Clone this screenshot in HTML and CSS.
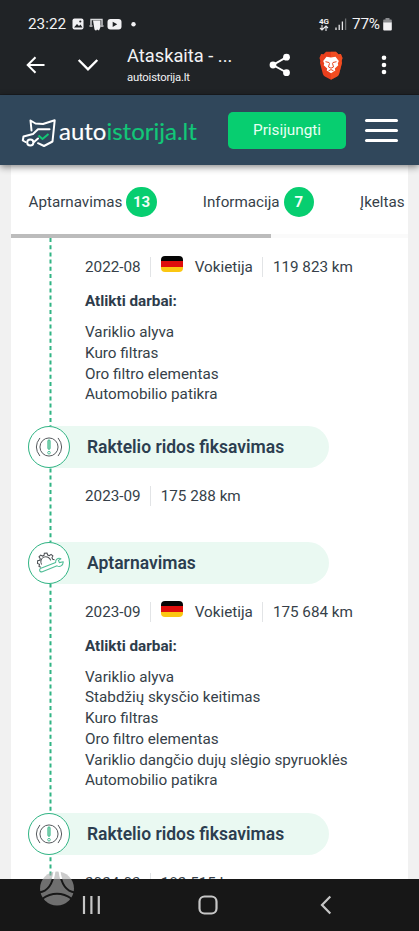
FILE: index.html
```html
<!DOCTYPE html>
<html lang="lt">
<head>
<meta charset="utf-8">
<meta name="viewport" content="width=device-width, initial-scale=1">
<title>Ataskaita - autoistorija.lt</title>
<link rel="stylesheet" href="styles.css">
</head>
<body>
<svg class="defs" width="0" height="0">
  <symbol id="brake" viewBox="0 0 42 42">
    <circle cx="21" cy="21" r="9.500" fill="none" stroke="#4d5155" stroke-width="1"/>
    <path d="M11.500 11.500q-7.500 9.500 0 19M30.500 11.500q7.500 9.500 0 19" fill="none" stroke="#4d5155" stroke-width="1"/>
    <rect x="19.800" y="13.500" width="2.400" height="10" rx="1.200" fill="#8ad5b5" stroke="#3cb98b" stroke-width=".9"/>
    <circle cx="21" cy="27" r="1.400" fill="none" stroke="#3cb98b" stroke-width=".9"/>
  </symbol>
  <symbol id="service" viewBox="0 0 42 42">
    <path d="M12.500 25.500l-2-.8.500-2.300-2.100-1 .2-2.800 2.200-.5.500-1.700-1.300-1.800 1.700-1.900 2 1 1.600-.8.300-2.200 2.800-.1.700 2 1.800.6 1.700-1.300 2 1.700-1 2 .8 1.500 1.900.5M13.200 22.500a5.300 5.300 0 1 1 9.600-4.200" fill="none" stroke="#4d5155" stroke-width="1.100"/>
    <path d="M12.500 26.500L28 20.500C27.500 17 30.500 15.300 33.500 16.500L30.900 18.300 31.900 20.600 36 19.800C35.700 24 32.300 25.500 29.500 24L14 30.200C11 31 10.100 27.700 12.500 26.500Z" fill="#fff" stroke="#4fbd96" stroke-width="1.100" stroke-linejoin="round"/>
  </symbol>
</svg>

<header class="system">
  <div class="status">
    <span class="clock">23:22</span>
    <svg class="notes" width="74" height="14" viewBox="0 0 74 14">
      <rect x="1.500" y="1.500" width="11" height="11" rx="2" fill="#f2f2f4"/>
      <path d="M3 10.500l3-3.500 2 2 1.500-1.500 2 3z" fill="#202326"/><circle cx="9.300" cy="4.500" r="1.100" fill="#202326"/>
      <path d="M20 8V2.500h11V8M18.500 9h3M29.500 9h3" fill="none" stroke="#d7d8da" stroke-width="1.400"/>
      <path d="M22 3.500h7.500v6.500l-1.500 3.500-2-1-1 1.300-1.500-1.300z" fill="#f2f2f4"/>
      <rect x="36.500" y="2" width="14" height="10.500" rx="3" fill="#f2f2f4"/><path d="M41.700 4.700l4.500 2.600-4.500 2.600z" fill="#202326"/>
      <circle cx="62.500" cy="7.300" r="2.200" fill="#f2f2f4"/>
    </svg>
    <span class="net"><b>4G</b>
      <svg width="10" height="6" viewBox="0 0 10 6"><path d="M3 0v5M1 3l2 2 2-2M7 6V1M5 3l2-2 2 2" fill="none" stroke="#e8e8ea" stroke-width="1.100"/></svg>
    </span>
    <svg class="signal" width="12" height="12" viewBox="0 0 12 12"><path d="M1 12V9.500M4.200 12V6.800M7.400 12V3.500" stroke="#e8e8ea" stroke-width="1.300"/><path d="M10.600 12V.5" stroke="#6d7073" stroke-width="1.300"/></svg>
    <span class="percent">77%</span>
    <svg class="battery" width="9" height="13" viewBox="0 0 9 13"><path d="M2.500 0h4v1.500H8q.8 0 .8.900V5H.2V2.400q0-.9.800-.9h1.500z" fill="#8b8d90"/><path d="M.2 4.500h8.600v7q0 1-1 1H1.200q-1 0-1-1z" fill="#f2f2f4"/></svg>
  </div>
  <div class="browser">
    <svg class="back" width="20" height="18" viewBox="0 0 20 18"><path d="M18.500 9H2M9.500 1.200L1.700 9l7.800 7.800" fill="none" stroke="#fff" stroke-width="2"/></svg>
    <svg class="down" width="22" height="14" viewBox="0 0 22 14"><path d="M1.700 2L11 11.300 20.300 2" fill="none" stroke="#fff" stroke-width="2.400"/></svg>
    <div class="page-name"><div class="title">Ataskaita - ...</div><div class="domain">autoistorija.lt</div></div>
    <svg class="share" width="22" height="24" viewBox="0 0 22 24"><path d="M17.500 4.200L4 12l13.500 7.500" fill="none" stroke="#fff" stroke-width="2"/><g fill="#fff"><circle cx="17.500" cy="4.200" r="3.400"/><circle cx="4" cy="12" r="3.400"/><circle cx="17.500" cy="19.700" r="3.400"/></g></svg>
    <svg class="brave" width="24" height="29" viewBox="0 0 24 29">
      <path d="M7 .8h10l2.400 2.500 2.500-.2L23.500 7l-.8 3 .3 2-2.900 11q-.6 1.600-2 2.600L12 28.700l-6.100-3.100q-1.400-1-2-2.600L1 12l.3-2L.5 7l1.600-3.900 2.500.2z" fill="#e93f1d"/>
      <path d="M17 .8l2.400 2.500 2.500-.2L23.500 7l-.8 3 .3 2-2.900 11q-.6 1.600-2 2.600L12 28.700V.8z" fill="#fa5a24" opacity=".55"/>
      <path d="M7.500 5.800l4.500.7 4.500-.7 3.300 4.200-1 2.500.5 1.700-3.500 3.300.5 2-4.300 2.800-4.300-2.800.5-2-3.500-3.300.5-1.700-1-2.500z" fill="#fff"/>
      <path d="M6.500 10.700l3.500.8.500.8-1 3.700 2.500 1.200 2.500-1.200-1-3.700.5-.8 3.500-.8M9.500 19.800l2.500-1.200 2.500 1.200" fill="none" stroke="#e8471f" stroke-width="1"/>
    </svg>
    <svg class="more" width="6" height="20" viewBox="0 0 6 20"><g fill="#fff"><circle cx="3" cy="2.800" r="2.300"/><circle cx="3" cy="10" r="2.300"/><circle cx="3" cy="17" r="2.300"/></g></svg>
  </div>
</header>

<nav class="site">
  <svg class="emblem" width="36" height="30" viewBox="0 0 36 30">
    <g fill="none" stroke="#fff" stroke-width="2" stroke-linejoin="round" stroke-linecap="round">
      <path d="M10.500 12.500L9.500 2.500 14.500 5.500 22 6 33.700 2.300 31.500 23.500 23 28 17 25.200"/>
      <path d="M28.500 11.200H17L12 16 2.500 18.500 1.800 22.500 4.500 24M13 24L17 20.500"/>
      <circle cx="9.300" cy="24.500" r="3.100"/>
    </g>
    <path d="M17.500 17.500l4 3.500 6-5" fill="none" stroke="#13c875" stroke-width="2"/>
  </svg>
  <div class="wordmark">auto<span>istorija.lt</span></div>
  <a class="login">Prisijungti</a>
  <div class="burger"><i></i><i></i><i></i></div>
</nav>

<main class="sheet">
  <div class="tabs">
    <div class="tab">Aptarnavimas <b>13</b></div>
    <div class="tab">Informacija <b>7</b></div>
    <div class="tab">Įkeltas</div>
  </div>
  <div class="scroller"><i></i></div>

  <div class="timeline">
    <svg class="rail" width="3" height="641" viewBox="0 0 3 641"><path d="M1.500 0V641" stroke="#31b484" stroke-width="2" stroke-dasharray="4 3.200"/></svg>
    <section class="event first">
      <div class="meta"><span>2022-08</span><span class="place"><i class="flag"></i>Vokietija</span><span>119 823 km</span></div>
      <h3>Atlikti darbai:</h3>
      <ul><li>Variklio alyva</li><li>Kuro filtras</li><li>Oro filtro elementas</li><li>Automobilio patikra</li></ul>
    </section>
    <section class="event">
      <div class="head"><svg class="badge"><use href="#brake"/></svg><h2>Raktelio ridos fiksavimas</h2></div>
      <div class="meta"><span>2023-09</span><span>175 288 km</span></div>
    </section>
    <section class="event after-short">
      <div class="head"><svg class="badge"><use href="#service"/></svg><h2>Aptarnavimas</h2></div>
      <div class="meta"><span>2023-09</span><span class="place"><i class="flag"></i>Vokietija</span><span>175 684 km</span></div>
      <h3>Atlikti darbai:</h3>
      <ul><li>Variklio alyva</li><li>Stabdžių skysčio keitimas</li><li>Kuro filtras</li><li>Oro filtro elementas</li><li>Variklio dangčio dujų slėgio spyruoklės</li><li>Automobilio patikra</li></ul>
    </section>
    <section class="event">
      <div class="head"><svg class="badge"><use href="#brake"/></svg><h2>Raktelio ridos fiksavimas</h2></div>
      <div class="meta"><span>2024-03</span><span>182 515 km</span></div>
    </section>
  </div>
</main>

<footer class="keys">
  <svg class="watermark" width="36" height="36" viewBox="0 0 36 36">
    <mask id="spokes"><rect width="36" height="36" fill="#fff"/><path d="M0 21.500Q13 20 15.500 0M20.500 0Q23 20 36 21.500M3 28Q18 17.500 33 28" fill="none" stroke="#000" stroke-width="2"/></mask>
    <circle cx="18" cy="17.500" r="17" fill="#aaa" fill-opacity=".6" mask="url(#spokes)"/>
  </svg>
  <svg class="recents" width="19" height="20" viewBox="0 0 19 20"><path d="M2 1v18M9.400 1v18M16.800 1v18" stroke="#c6c6c6" stroke-width="2.200"/></svg>
  <svg class="home" width="20" height="20" viewBox="0 0 20 20"><rect x="1.500" y="1.500" width="17" height="17" rx="5" fill="none" stroke="#c6c6c6" stroke-width="2.200"/></svg>
  <svg class="return" width="12" height="20" viewBox="0 0 12 20"><path d="M10.300 1.500L2 10l8.300 8.500" fill="none" stroke="#c6c6c6" stroke-width="2.200"/></svg>
</footer>
</body>
</html>
```
FILE: styles.css
```css
* { box-sizing: border-box; }
body { margin: 0; width: 419px; height: 931px; overflow: hidden; display: flex; flex-direction: column; background: #f1f1f1; color: #363f49; font: 15.25px/20px Roboto, sans-serif; }
svg { display: block; flex: none; }
.defs { position: absolute; }
h2, h3, ul { margin: 0; padding: 0; list-style: none; }

.system { height: 95px; flex: none; background: #202326; color: #f2f2f4; padding-top: 14px; border-bottom: 1px solid #1a1c1f; }
.status { display: flex; align-items: center; height: 20px; padding-left: 28px; }
.clock { width: 43px; font-size: 15.3px; }
.net { display: flex; flex-direction: column; width: 11px; margin-left: 174px; font-size: 8px; line-height: 7px; }
.net b { font-weight: 700; }
.signal { margin-left: 5px; }
.percent { margin-left: 5px; width: 30px; font-size: 15.3px; letter-spacing: -.2px; }
.battery { margin-left: 1px; }
.browser { display: flex; align-items: center; height: 56px; padding: 6px 0 0 26px; }
.down { margin-left: 31px; }
.page-name { width: 110px; margin-left: 28px; height: 42px; white-space: nowrap; }
.title { font-size: 18.3px; line-height: 24px; }
.domain { font-size: 11.3px; line-height: 16px; margin-top: 2px; letter-spacing: -.2px; }
.share { margin-left: 32px; }
.brave { margin-left: 28px; }
.more { margin-left: 38px; }

.site { height: 70px; flex: none; background: #30475b; display: flex; align-items: center; padding-left: 21px; position: relative; z-index: 2; box-shadow: 0 2px 7px rgba(0,0,0,.48); }
.emblem { margin-top: 6px; }
.wordmark { width: 169px; color: #fff; font: 400 24px/28px Lato, sans-serif; letter-spacing: 0; -webkit-text-stroke: .15px currentColor; white-space: nowrap; margin: 2px 0 0 2px; }
.wordmark span { color: #12c878; }
.login { width: 118px; height: 37px; border-radius: 5px; background: #07ce70; color: #e9fff3; font-size: 15.3px; line-height: 37px; text-align: center; }
.burger { width: 33px; height: 23px; margin: 1px 0 0 19px; display: flex; flex-direction: column; justify-content: space-between; }
.burger i { height: 3px; border-radius: 2px; background: #fff; }

.sheet { width: 397px; height: 714px; flex: none; margin-left: 11px; background: #fff; overflow: hidden; }
.tabs { height: 69px; display: flex; align-items: center; padding: 5px 0 0 17.5px; white-space: nowrap; gap: 46px; }
.tab { display: flex; align-items: center; gap: 4px; font-size: 15.2px; }
.tab b { width: 30.5px; height: 30.5px; border-radius: 50%; background: #07ce70; color: #f2fff8; font-size: 15px; line-height: 31px; text-align: center; }
.scroller { height: 4px; background: #fafafa; }
.scroller i { display: block; width: 260px; height: 4px; background: #bcbcbc; }

.timeline { position: relative; padding-left: 17px; height: 641px; overflow: hidden; }
.rail { position: absolute; left: 38px; top: 0; }
.event { position: relative; margin-top: 21.2px; }
.event.first { margin-top: 0; padding-top: 1px; }
.event.after-short { margin-top: 35.4px; }
.event:last-child { margin-top: 21.8px; }
.head { width: 301px; height: 42px; border-radius: 21px; background: #eaf9f2; display: flex; align-items: center; }
.badge { width: 42px; height: 42px; border: 1.5px solid #31b484; border-radius: 50%; background: #fff; }
h2 { margin-left: 17px; font-size: 17.5px; font-weight: 600; line-height: 24px; color: #2c3e50; }
.meta { height: 20px; margin: 18px 0 0 57px; display: flex; white-space: nowrap; }
.meta > span + span { border-left: 1px solid #e2e4e6; margin-left: 9px; padding-left: 10px; }
.place { display: flex; }
.flag { width: 22px; height: 16px; margin: -1px 12px 0 0; border-radius: 4px; background: linear-gradient(#050505 0 34%, #df0e0d 34% 67%, #fbc712 67%); }
h3 { margin: 14px 0 11px 57px; font-size: 15.25px; line-height: 20px; color: #2e3c4b; }
ul { margin-left: 57px; line-height: 20.75px; white-space: nowrap; }

.keys { height: 52px; flex: none; background: #171717; position: relative; z-index: 3; display: flex; align-items: center; padding-left: 82px; }
.watermark { position: absolute; left: 39px; top: -8px; }
.home { margin-left: 97px; }
.return { margin-left: 102px; }
```
